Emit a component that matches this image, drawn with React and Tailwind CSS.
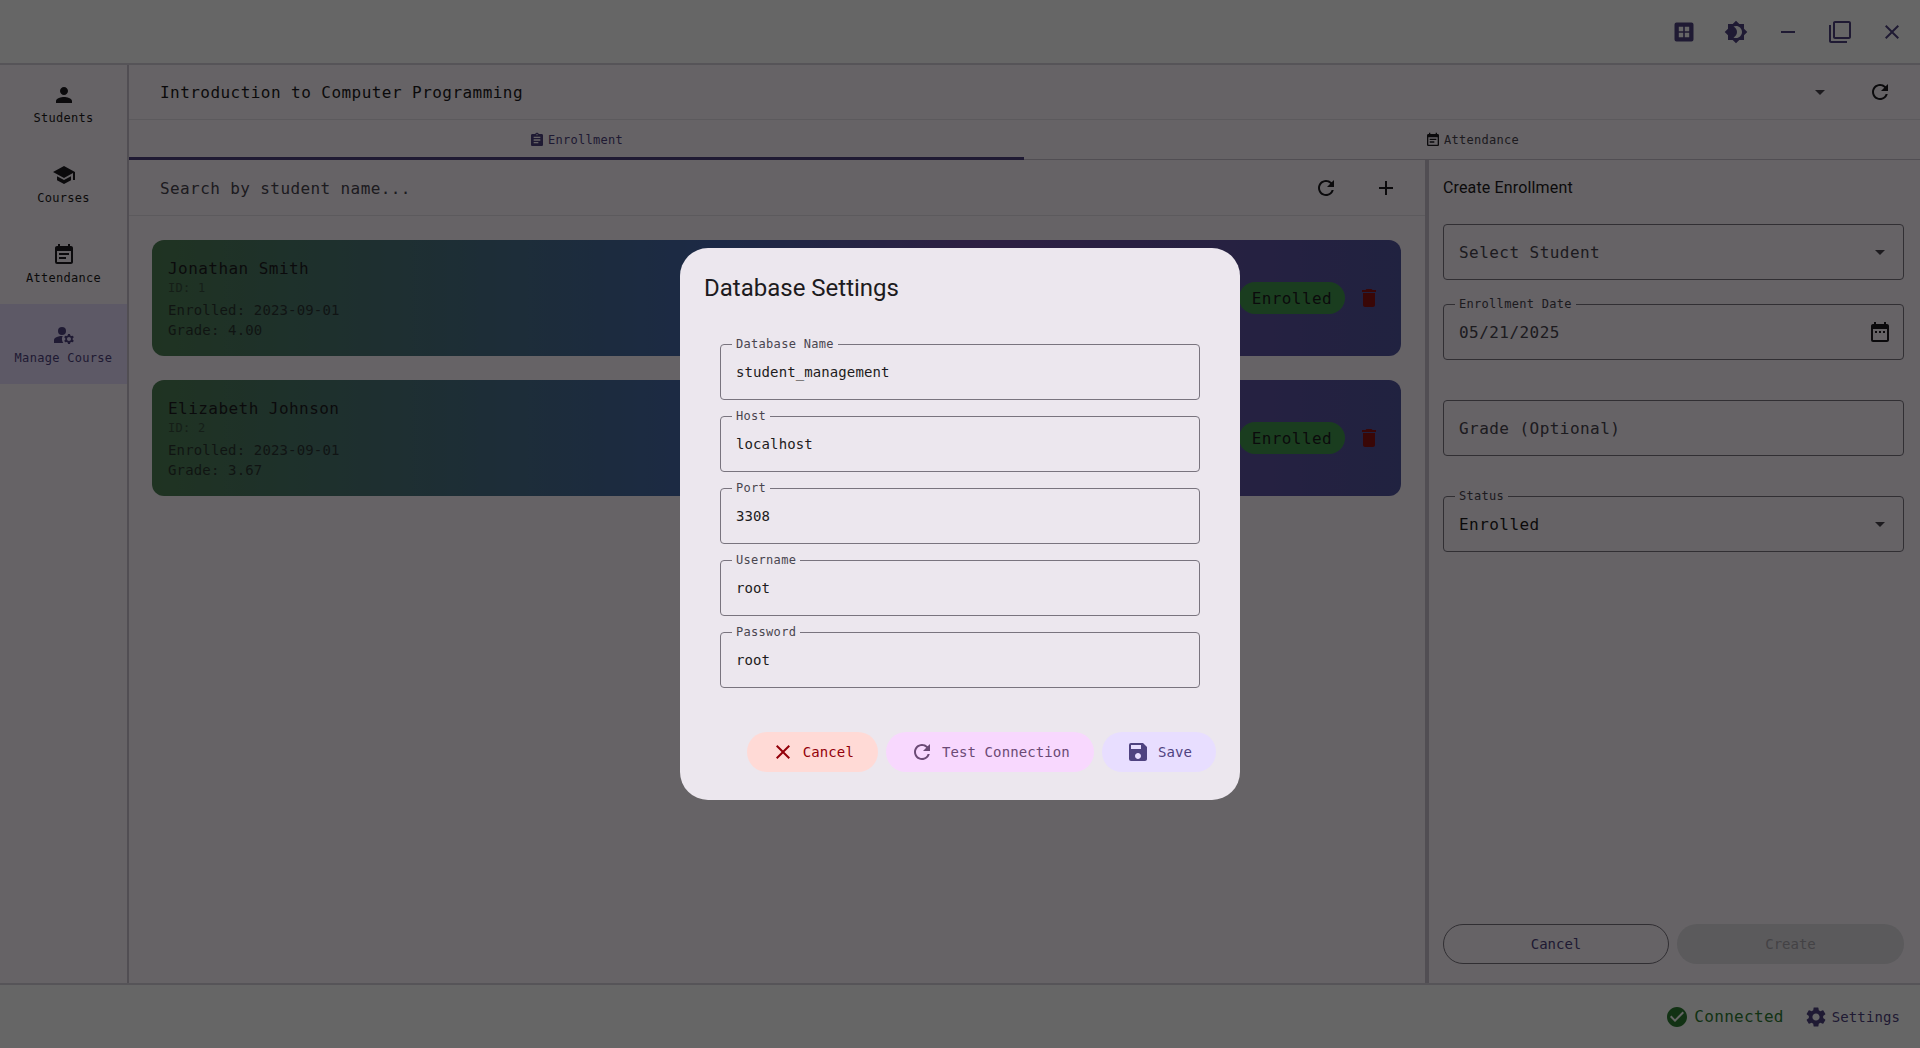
import React from "react";
import {
  MdAdd,
  MdArrowDropDown,
  MdAssignment,
  MdBrightness4,
  MdCheckCircle,
  MdClose,
  MdDateRange,
  MdDelete,
  MdEventNote,
  MdFilterNone,
  MdManageAccounts,
  MdPerson,
  MdRefresh,
  MdRemove,
  MdSave,
  MdSchool,
  MdSettings,
} from "react-icons/md";

const NAV = [
  { label: "Students", Icon: MdPerson },
  { label: "Courses", Icon: MdSchool },
  { label: "Attendance", Icon: MdEventNote },
  { label: "Manage Course", Icon: MdManageAccounts, active: true },
];

const STUDENTS = [
  { name: "Jonathan Smith", id: 1, enrolled: "2023-09-01", grade: "4.00" },
  { name: "Elizabeth Johnson", id: 2, enrolled: "2023-09-01", grade: "3.67" },
];

const DB_FIELDS = [
  { label: "Database Name", value: "student_management" },
  { label: "Host", value: "localhost" },
  { label: "Port", value: "3308" },
  { label: "Username", value: "root" },
  { label: "Password", value: "root" },
];

// rounded square with four small panes, top right of the title bar
const GridIcon = () => (
  <svg width="24" height="24" viewBox="0 0 24 24" fill="currentColor">
    <path
      fillRule="evenodd"
      d="M4.5 2.5h15a2 2 0 0 1 2 2v15a2 2 0 0 1-2 2h-15a2 2 0 0 1-2-2v-15a2 2 0 0 1 2-2zM6.8 6.8v4.4h4.4V6.8zM12.8 6.8v4.4h4.4V6.8zM6.8 12.8v4.4h4.4v-4.4zM12.8 12.8v4.4h4.4v-4.4z"
    />
  </svg>
);

const StudentCard = ({ student }) => (
  <div className="h-[116px] rounded-xl pl-4 pr-5 flex items-center justify-between bg-[linear-gradient(90deg,#4f8055_0%,#4668ae_45%,#7350a8_66%,#5255a0_100%)]">
    <div className="text-[#1d1b20]">
      <div className="text-base leading-6 pt-px -mb-px tracking-[0.45px]">{student.name}</div>
      <div className="text-xs leading-4 tracking-[0.3px] opacity-50">ID: {student.id}</div>
      <div className="text-sm leading-5 mt-1 tracking-[0.15px] opacity-75">Enrolled: {student.enrolled}</div>
      <div className="text-sm leading-5 tracking-[0.15px] opacity-75">Grade: {student.grade}</div>
    </div>
    <div className="flex items-center gap-3">
      <span className="h-8 px-[13px] pt-[2px] rounded-full bg-[#429a4e] text-[#1d1b20] text-base tracking-[0.4px] flex items-center">Enrolled</span>
      <MdDelete size={24} className="text-[#8f1212]" />
    </div>
  </div>
);

const SideField = ({ label, value, muted, children }) => (
  <div className="relative h-14 rounded border border-[#7a7580] flex items-center justify-between pl-[15px] pr-[11px]">
    {label && <span className="absolute -top-[9px] left-[11px] px-1 bg-[#fef7ff] text-xs leading-4 tracking-[0.3px] text-[#49454f]">{label}</span>}
    <span className={`pt-[2px] text-base tracking-[0.45px] ${muted ? "text-[#49454f]" : "text-[#1d1b20]"}`}>{value}</span>
    {children}
  </div>
);

const DbField = ({ label, value }) => (
  <div className="relative h-14 rounded border border-[#79747e] flex items-center pl-[15px] pr-4">
    <span className="absolute -top-[9px] left-[11px] px-1 bg-[#ece7ee] text-xs leading-4 tracking-[0.3px] text-[#49454f]">{label}</span>
    <input readOnly value={value} className="w-full outline-none bg-transparent text-sm tracking-[0.1px] text-[#1d1b20]" />
  </div>
);

const DialogButton = ({ Icon, className, children }) => (
  <button className={`h-10 px-6 rounded-full flex items-center gap-2 text-sm tracking-[0.1px] ${className}`}>
    <Icon size={24} />
    {children}
  </button>
);

const App = () => {
  return (
    <div className="relative h-screen w-full overflow-hidden flex flex-col bg-[#fef7ff] text-[#1d1b20] font-['DejaVu_Sans_Mono',monospace]">
      {/* title bar */}
      <div className="relative z-10 h-[65px] -mb-px shrink-0 border-b-2 border-[#d8d3dc] bg-white flex items-center justify-end pr-4 pt-px text-[#4f4380]">
        <div className="flex items-center gap-7">
          <GridIcon />
          <MdBrightness4 size={24} />
          <MdRemove size={24} />
          <MdFilterNone size={24} />
          <MdClose size={24} />
        </div>
      </div>

      <div className="flex-1 min-h-0 flex">
        {/* sidebar */}
        <div className="relative z-[1] w-[129px] -mr-px shrink-0 border-r-2 border-[#cac4d0] flex flex-col">
          {NAV.map(({ label, Icon, active }) => (
            <div
              key={label}
              className={`h-20 flex flex-col items-center justify-center text-xs tracking-[0.3px] ${active ? "bg-[#e8deff] text-[#4f4380]" : ""}`}
            >
              <Icon size={24} />
              <span className="mt-[3px] leading-4">{label}</span>
            </div>
          ))}
        </div>

        <div className="flex-1 min-w-0 flex flex-col">
          {/* course selector */}
          <div className="h-[56px] shrink-0 border-b border-[#e6e0e9] flex items-center pl-[32px] pr-7">
            <span className="flex-1 pt-[2px] tracking-[0.45px]">Introduction to Computer Programming</span>
            <MdArrowDropDown size={24} className="text-[#49454f] mr-[36px]" />
            <MdRefresh size={24} />
          </div>

          {/* tabs */}
          <div className="h-10 shrink-0 border-b border-[#cac4d0] grid grid-cols-2 text-xs tracking-[0.3px]">
            <div className="relative flex items-center justify-center gap-[3px] text-[#4f4380]">
              <MdAssignment size={16} />
              Enrollment
              <span className="absolute left-0 right-0 -bottom-px h-[3px] bg-[#4f4380]" />
            </div>
            <div className="flex items-center justify-center gap-[3px] text-[#49454f]">
              <MdEventNote size={16} className="text-[#1d1b20]" />
              Attendance
            </div>
          </div>

          <div className="flex-1 min-h-0 flex">
            {/* enrollment list */}
            <div className="w-[1297px] shrink-0 flex flex-col">
              <div className="h-14 shrink-0 border-b border-[#e6e0e9] flex items-center pl-[32px] pr-[27px]">
                <input
                  readOnly
                  placeholder="Search by student name..."
                  className="flex-1 pt-[2px] bg-transparent outline-none tracking-[0.4px] placeholder:text-[#49454f]"
                />
                <MdRefresh size={24} className="mr-[36px]" />
                <MdAdd size={24} />
              </div>
              <div className="p-6 flex flex-col gap-6">
                {STUDENTS.map((s) => (
                  <StudentCard key={s.id} student={s} />
                ))}
              </div>
            </div>

            {/* create form */}
            <div className="flex-1 min-w-0 border-l-4 border-[#cac4d0] pl-[14px] pr-4 flex flex-col">
              <h2 className="mt-4 h-6 leading-6 text-base tracking-[0.15px] font-['Roboto',sans-serif]">Create Enrollment</h2>
              <div className="mt-6">
                <SideField value="Select Student" muted>
                  <MdArrowDropDown size={24} className="text-[#49454f]" />
                </SideField>
              </div>
              <div className="mt-6">
                <SideField label="Enrollment Date" value="05/21/2025" muted>
                  <MdDateRange size={24} />
                </SideField>
              </div>
              <div className="mt-10">
                <SideField value="Grade (Optional)" muted />
              </div>
              <div className="mt-10">
                <SideField label="Status" value="Enrolled">
                  <MdArrowDropDown size={24} className="text-[#49454f]" />
                </SideField>
              </div>
              <div className="mt-auto mb-[19px] flex gap-2">
                <button className="w-[226px] h-10 rounded-full border border-[#79747e] text-sm text-[#4f4380]">Cancel</button>
                <button className="flex-1 h-10 rounded-full bg-[#e3e0e6] text-sm text-[#a9a5ac]">Create</button>
              </div>
            </div>
          </div>
        </div>
      </div>

      {/* status bar */}
      <div className="h-[65px] shrink-0 border-t-2 border-[#d8d3dc] bg-white flex items-center justify-end pr-5">
        <MdCheckCircle size={24} className="text-[#2e7d32]" />
        <span className="ml-[5px] tracking-[0.3px] text-[#2e7d32]">Connected</span>
        <MdSettings size={24} className="ml-[20px] text-[#4f4380]" />
        <span className="ml-[4px] text-sm tracking-[0.1px] text-[#4f4380]">Settings</span>
      </div>

      {/* database settings dialog */}
      <div className="absolute inset-0 z-20 bg-black/60 flex items-center justify-center">
        <div className="w-[560px] rounded-[28px] bg-[#ece7ee] pt-6 pb-7 pr-6">
          <h2 className="pl-6 h-8 leading-8 text-2xl text-[#1d1b20] font-['Roboto',sans-serif]">Database Settings</h2>
          <div className="mt-10 pl-10 pr-4 flex flex-col gap-4">
            {DB_FIELDS.map((f) => (
              <DbField key={f.label} label={f.label} value={f.value} />
            ))}
          </div>
          <div className="mt-11 flex justify-end gap-2">
            <DialogButton Icon={MdClose} className="bg-[#ffdad6] text-[#93000a]">Cancel</DialogButton>
            <DialogButton Icon={MdRefresh} className="bg-[#f8d8fe] text-[#6b4a75]">Test Connection</DialogButton>
            <DialogButton Icon={MdSave} className="bg-[#e8deff] text-[#4f4380]">Save</DialogButton>
          </div>
        </div>
      </div>
    </div>
  );
};

export default App;
